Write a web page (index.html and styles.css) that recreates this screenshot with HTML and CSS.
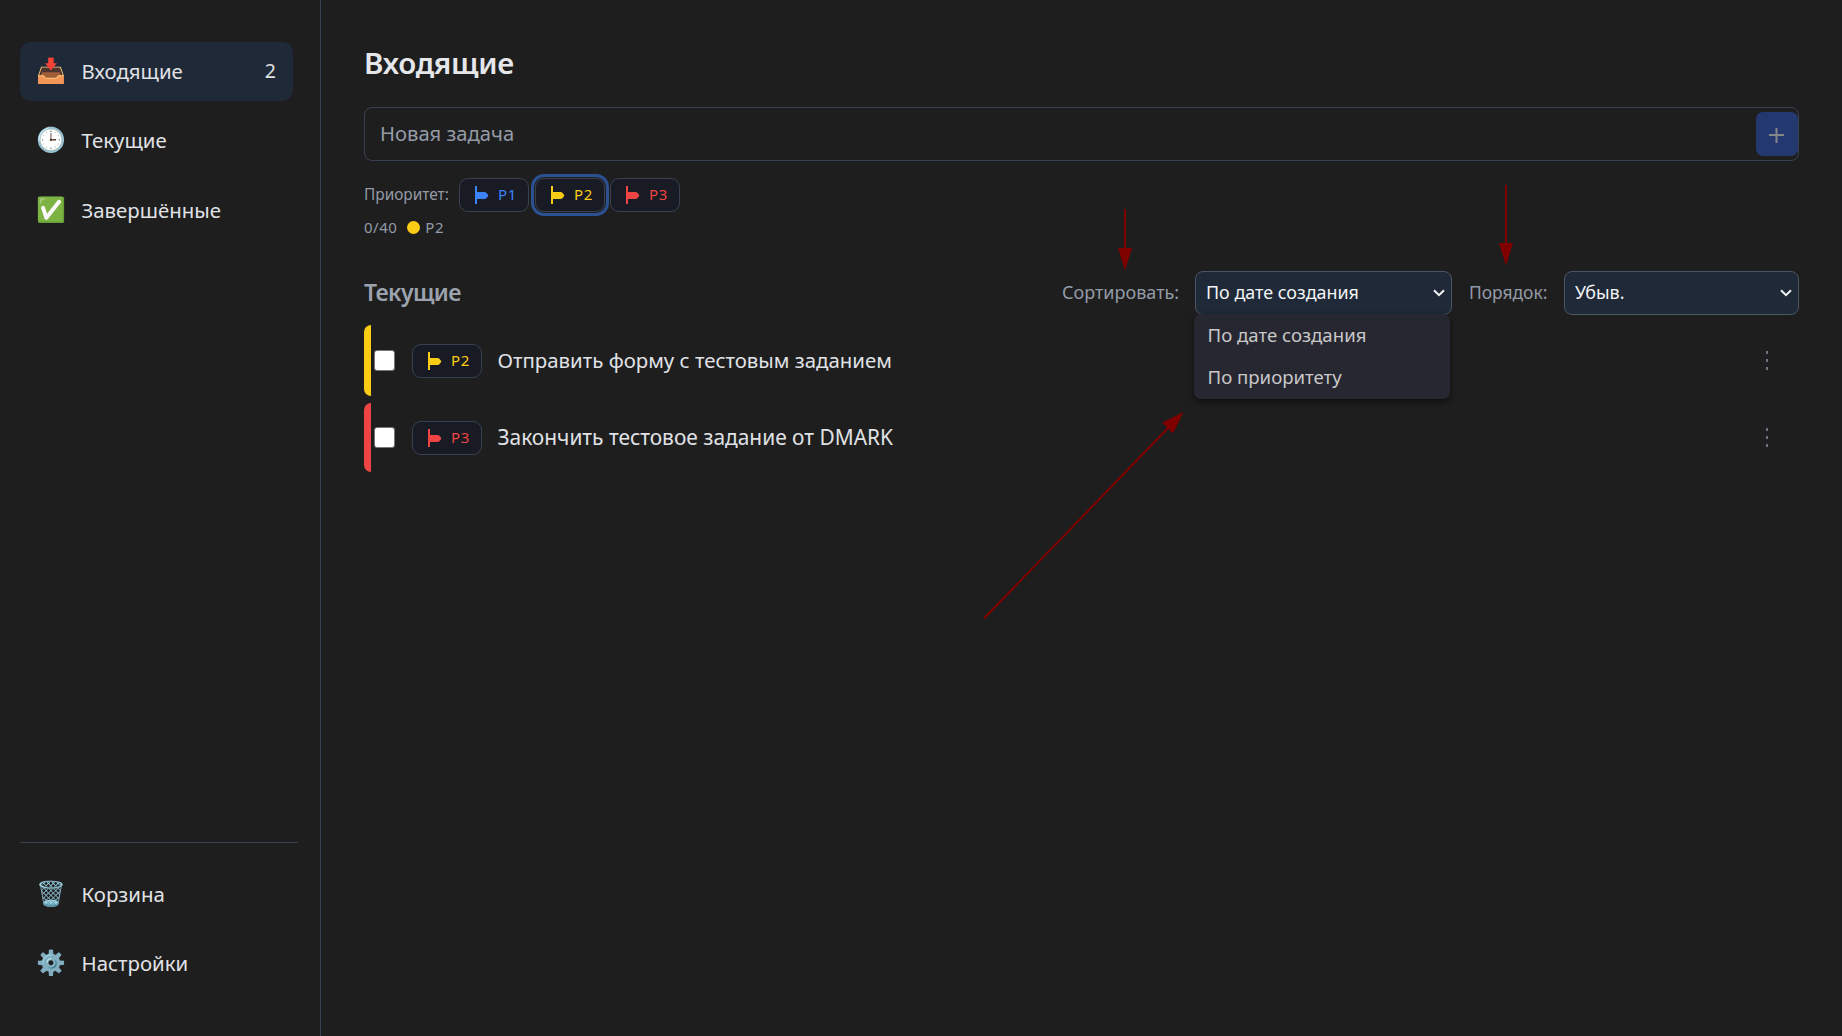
FILE: index.html
```html
<!DOCTYPE html>
<html lang="ru">
<head>
<meta charset="UTF-8">
<title>Входящие</title>
<link rel="stylesheet" href="styles.css">
</head>
<body>
<svg class="defs" width="0" height="0">
  <symbol id="flag" viewBox="0 0 14 18">
    <path d="M0 0h2v6h7.200q1.800 0 2.600 1.200l1.400 1.900v.8l-1.400 1.900q-.8 1.200-2.600 1.200H2v5H0z" fill="currentColor"/>
  </symbol>
  <symbol id="chevron" viewBox="0 0 12 8">
    <path d="M1 1.200l5 5 5-5" fill="none" stroke="currentColor" stroke-width="2"/>
  </symbol>
</svg>
<div class="app">
  <aside class="sidebar">
    <nav class="nav">
      <a class="nav-item active"><span class="emoji">📥</span><span>Входящие</span><span class="count">2</span></a>
      <a class="nav-item"><span class="emoji">🕒</span><span>Текущие</span></a>
      <a class="nav-item"><span class="emoji">✅</span><span>Завершённые</span></a>
    </nav>
    <nav class="nav nav-bottom">
      <a class="nav-item"><span class="emoji">🗑️</span><span>Корзина</span></a>
      <a class="nav-item"><span class="emoji">⚙️</span><span>Настройки</span></a>
    </nav>
  </aside>
  <main class="main">
    <h1 class="title">Входящие</h1>
    <div class="new-task"><span>Новая задача</span><button class="add"><svg width="15" height="15" viewBox="0 0 15 15"><path d="M0 7h15M7.500 0v15" stroke="currentColor" stroke-width="2"/></svg></button></div>
    <div class="priority">
      <span class="priority-label">Приоритет:</span>
      <span class="chip p1"><svg class="flag"><use href="#flag"/></svg><span>P1</span></span>
      <span class="chip p2 selected"><svg class="flag"><use href="#flag"/></svg><span>P2</span></span>
      <span class="chip p3"><svg class="flag"><use href="#flag"/></svg><span>P3</span></span>
    </div>
    <div class="meta"><span>0/40</span><i class="dot"></i><span>P2</span></div>
    <div class="toolbar">
      <h2 class="subtitle">Текущие</h2>
      <span class="label">Сортировать:</span>
      <div class="select sort"><span>По дате создания</span><svg class="chevron"><use href="#chevron"/></svg>
        <div class="menu"><div class="option">По дате создания</div><div class="option">По приоритету</div></div>
      </div>
      <span class="label order-label">Порядок:</span>
      <div class="select order"><span>Убыв.</span><svg class="chevron"><use href="#chevron"/></svg></div>
    </div>
    <div class="tasks">
      <div class="task task-p2"><i class="check"></i><span class="chip p2"><svg class="flag"><use href="#flag"/></svg><span>P2</span></span><span class="task-name">Отправить форму с тестовым заданием</span><span class="kebab"><i></i><i></i><i></i></span></div>
      <div class="task task-p3"><i class="check"></i><span class="chip p3"><svg class="flag"><use href="#flag"/></svg><span>P3</span></span><span class="task-name wide">Закончить тестовое задание от DMARK</span><span class="kebab"><i></i><i></i><i></i></span></div>
    </div>
  </main>
</div>
<svg class="arrows" viewBox="0 0 1842 1036">
  <g stroke="#800000" stroke-width="2"><path d="M1125 209v40M1506 185v59M984 618.500L1168 428"/></g>
  <g fill="#800000"><path d="M1118 248h14l-7 22.500zM1499 243h14l-7 22.500zM1183.500 412l-21 10.500 10.500 11z"/></g>
</svg>
</body>
</html>
```

FILE: styles.css
```css
* { box-sizing: border-box; }
body {
  margin: 0;
  background: #1e1e1e;
  color: #e0e2e6;
  font: 400 20.400px "Noto Sans", "Open Sans", sans-serif;
  overflow: hidden;
}
.defs { position: absolute; }
.app { display: flex; height: 1036px; }

.sidebar {
  width: 321px;
  flex: none;
  display: flex;
  flex-direction: column;
  justify-content: space-between;
  padding: 42px 22px 43px 20px;
  border-right: 1px solid #374151;
}
.nav { display: flex; flex-direction: column; gap: 10.500px; width: 273px; }
.nav-bottom { width: 278px; border-top: 1px solid #374151; padding-top: 22px; }
.nav-item {
  display: flex;
  align-items: center;
  height: 59px;
  padding: 0 17px 2px 16px;
  border-radius: 10px;
}
.nav-bottom .nav-item { padding-bottom: 1px; }
.active { background: #1f2937; }
.emoji { width: 45.500px; font-size: 24px; line-height: 30px; font-family: "Noto Color Emoji", sans-serif; }
.count { margin-left: auto; font-size: 19.500px; }

.main { flex: 1; padding: 42px 43px 0; }
.title { margin: 0; height: 65px; font-size: 29.500px; line-height: 41px; font-weight: 600; letter-spacing: -.3px; color: #e5e7eb; }
.new-task {
  display: flex;
  align-items: center;
  justify-content: space-between;
  height: 54px;
  padding-left: 15px;
  border: 1px solid #374151;
  border-radius: 8px;
  color: #949ba7;
  font-size: 20.200px;
}
.new-task span { padding-bottom: 2px; }
.add {
  display: grid;
  place-items: center;
  width: 42px;
  height: 44px;
  padding: 2px 1px 0 0;
  border: 0;
  border-radius: 7px;
  background: #22386f;
  color: #84868a;
}
.priority { display: flex; align-items: center; gap: 5px; margin-top: 17px; height: 34px; }
.priority-label { width: 90px; padding-bottom: 2px; font-size: 15.400px; color: #949ba7; }
.chip {
  display: flex;
  align-items: center;
  gap: 9px;
  width: 70px;
  height: 34px;
  flex: none;
  padding-left: 15px;
  border: 1px solid #374151;
  border-radius: 9px;
  background: #181b23;
  font-size: 15px;
  letter-spacing: .7px;
}
.chip span { padding-bottom: 2px; }
.flag { width: 14px; height: 18px; }
.priority .selected { margin-left: 1px; box-shadow: 0 0 0 1px #1e1e1e, 0 0 0 4px #2b5192; }
.p1 { color: #3b82f6; }
.p2 { color: #facc15; }
.p3 { color: #ef4444; }
.meta { display: flex; align-items: center; height: 31px; font-size: 15px; letter-spacing: .5px; color: #949ba7; }
.meta span { padding-bottom: 1px; }
.dot { width: 13px; height: 13px; margin: 0 5px 0 10px; border-radius: 50%; background: #facc15; }

.toolbar { display: flex; align-items: center; height: 44px; margin-top: 28px; }
.subtitle { margin: 0 auto 0 0; padding-bottom: 2px; font-size: 23px; font-weight: 600; letter-spacing: -.6px; color: #9ca3af; }
.label { width: 133px; padding-bottom: 2px; font-size: 18px; color: #949ba7; }
.order-label { width: 95px; font-size: 17.400px; }
.select {
  position: relative;
  display: flex;
  align-items: center;
  justify-content: space-between;
  height: 44px;
  padding: 0 6px 0 10px;
  border: 1px solid #4b5563;
  border-radius: 8px;
  background: #1f2937;
  color: #f3f4f6;
  font-size: 17.900px;
}
.select > span { padding-bottom: 2px; }
.sort { width: 257px; margin-right: 17px; }
.order { width: 235px; }
.chevron { width: 12px; height: 8px; }
.menu {
  position: absolute;
  left: -2px;
  top: 42px;
  width: 256px;
  height: 85px;
  border-radius: 7px;
  background: #272731;
  color: #c8c8c8;
  font-size: 18.600px;
  box-shadow: 0 3px 7px rgba(0, 0, 0, .5);
}
.option { height: 42px; line-height: 41px; padding-left: 13.500px; }

.tasks { display: flex; flex-direction: column; gap: 7px; margin-top: 10px; }
.task {
  display: flex;
  align-items: center;
  height: 71px;
  padding: 0 29px 0 3px;
  border-left: 7px solid #facc15;
  border-radius: 7px;
}
.task-p3 { height: 69px; border-left-color: #ef4444; }
.check { width: 21px; height: 21px; margin-right: 17px; border: 1px solid #767676; border-radius: 3px; background: #fff; }
.task-name { margin-left: 15.500px; padding-bottom: 1px; font-size: 20.400px; }
.wide { font-size: 20.900px; }
.kebab { display: flex; flex-direction: column; gap: 5px; margin-left: auto; padding-right: 2px; }
.kebab i { width: 2.500px; height: 3px; background: #6b7280; }
.arrows { position: absolute; inset: 0; width: 1842px; height: 1036px; pointer-events: none; }
```
